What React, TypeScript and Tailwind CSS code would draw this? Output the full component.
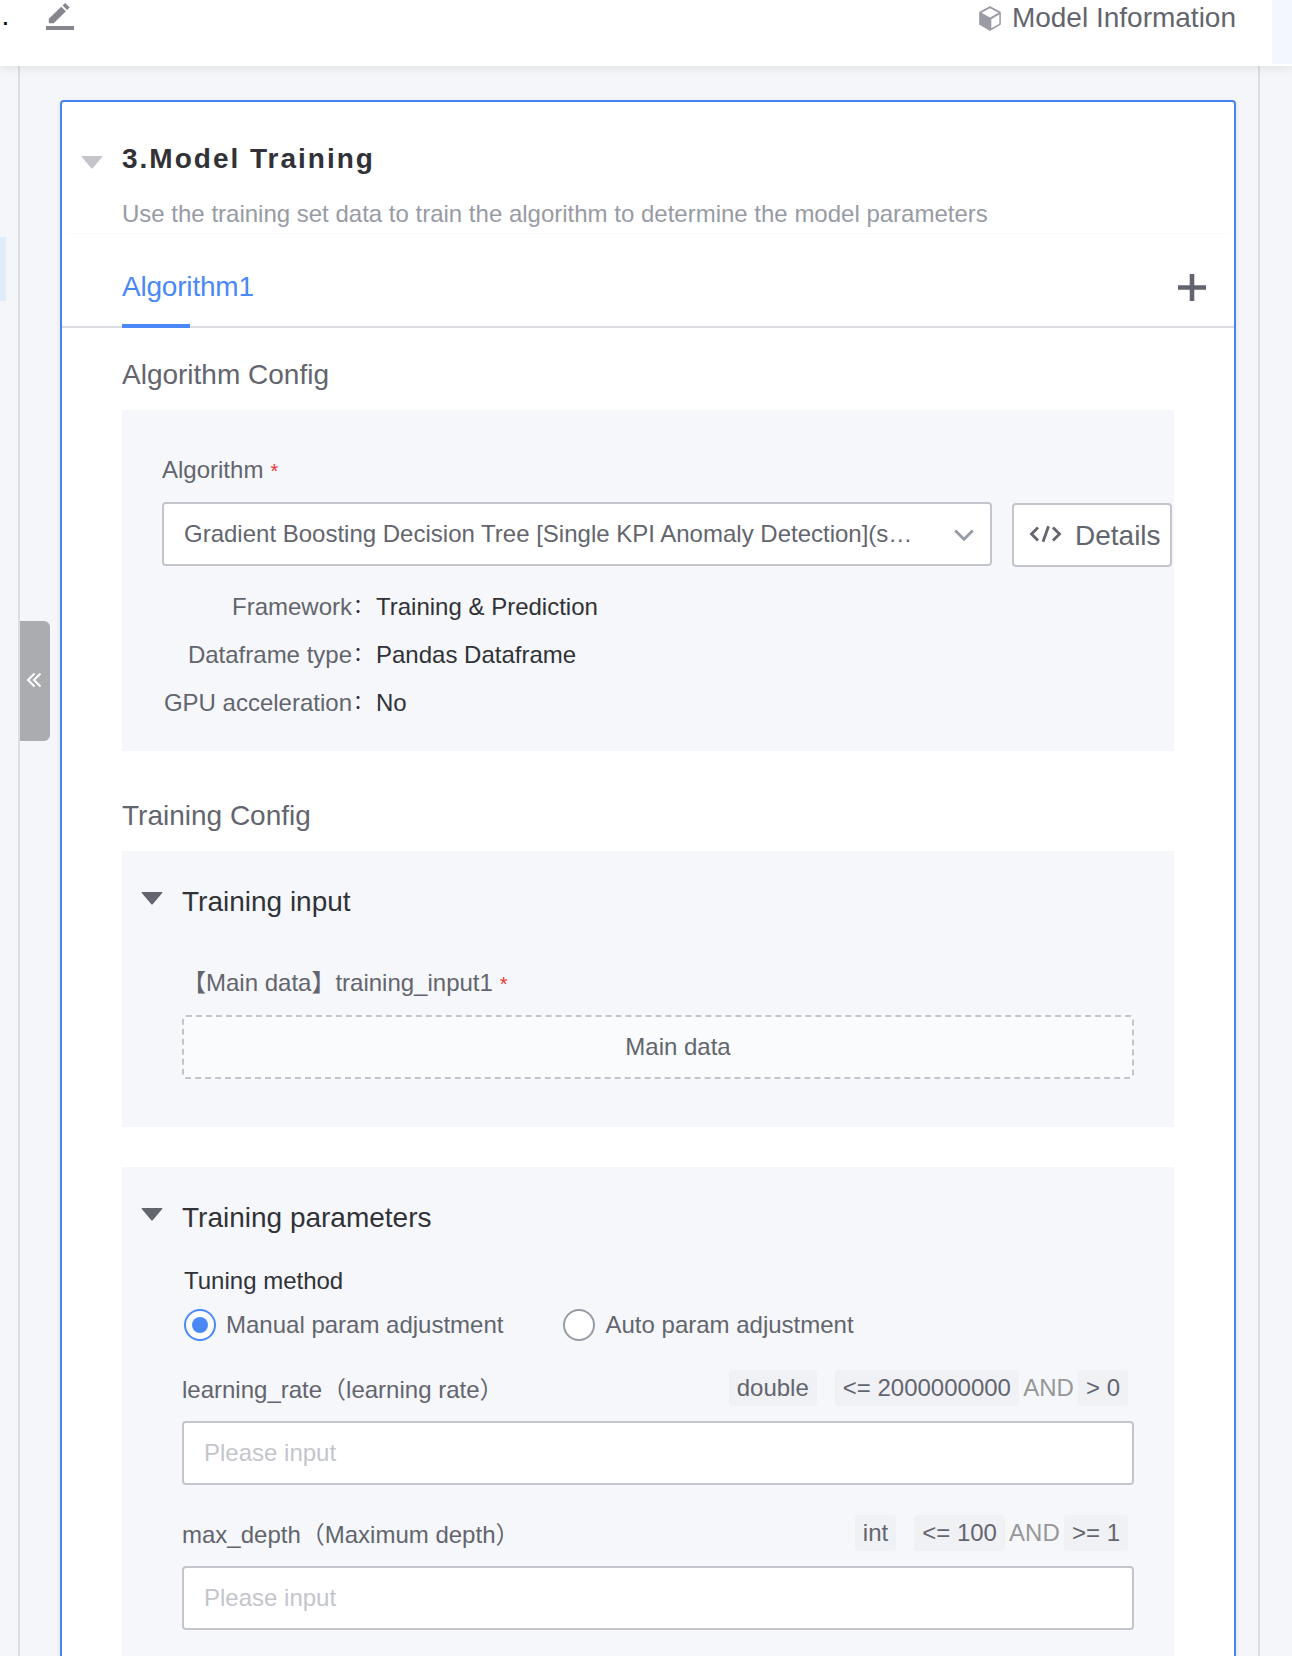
import type { ReactNode } from "react";

function Caret({ className }: { className: string }) {
  return (
    <svg className={className} width="22" height="13" viewBox="0 0 22 13" fill="currentColor">
      <path d="M1.200 0h19.600c.6 0 .8.7.4 1.100L11.700 12.200a1 1 0 0 1-1.400 0L.800 1.100C.4.7.6 0 1.200 0z" />
    </svg>
  );
}

function PencilIcon() {
  return (
    <svg width="28" height="28" viewBox="0 0 28 28" fill="#85868d">
      <path d="M2.800 15.800 15.200 3.800l4.700 4.500L7.700 20.200H2.800z" />
      <path d="m16.600 2.500 2.500-2.500 4.500 4.300-2.500 2.600z" />
      <path d="M0 23h28v4H0z" />
    </svg>
  );
}

function CubeIcon() {
  return (
    <svg width="22" height="25" viewBox="0 0 22 25">
      <path d="M11 .800 21.200 6.400v11.900L11 24.200.800 18.300V6.400z" fill="#9a9ba5" stroke="#9a9ba5" strokeWidth="1.200" strokeLinejoin="round" />
      <path d="M11 2.300 19.500 6.800 11 11.500 2.500 6.800z" fill="#fff" />
      <path d="M12.300 13.200 20.300 8.600v9.100l-8 4.600z" fill="#fff" />
    </svg>
  );
}

function Field({ name, type, rules }: { name: string; type: string; rules: [string, string] }) {
  return (
    <div className="h-[145px]">
      <div className="flex h-9 justify-between pr-1.5">
        <span className="mt-[2px] leading-[35px] whitespace-pre">{name}</span>
        <div className="flex items-center leading-9">
          <Tag>{type}</Tag>
          <span className="w-[18px]" />
          <Tag>{rules[0]}</Tag>
          <span className="w-[59px] text-center text-[#979799]">AND</span>
          <Tag>{rules[1]}</Tag>
        </div>
      </div>
      <input
        placeholder="Please input"
        className="mt-[15px] block h-16 w-full rounded border-2 border-[#c4c5cc] bg-white px-5 text-[24px] outline-none placeholder:text-[#c4c5cc]"
      />
    </div>
  );
}

function Tag({ children }: { children: ReactNode }) {
  return <span className="h-9 rounded bg-[#f0f1f5] px-2 leading-[35px] whitespace-nowrap">{children}</span>;
}

function Info({ label, value }: { label: string; value: string }) {
  return (
    <div className="flex h-12 leading-[48px]">
      <span className="w-[190px] text-right">{label}</span>
      <span className="-mt-px w-[24px] pl-px text-[20px] text-[#313238]">：</span>
      <span className="text-[#313238]">{value}</span>
    </div>
  );
}

export default function App() {
  return (
    <div className="relative flex h-[1656px] w-[1292px] flex-col overflow-hidden bg-[#f4f6fa] font-['Liberation_Sans','Noto_Sans_CJK_SC',sans-serif] text-[24px] text-[#63656e]">
      <header className="relative z-10 flex h-[66px] shrink-0 bg-white shadow-[0_2px_10px_rgba(0,0,0,0.09)]">
        <span className="w-[46px] pl-[1.500px] text-[28px] leading-8 text-black">.</span>
        <div className="pt-[3px]">
          <PencilIcon />
        </div>
        <div className="ml-auto flex pr-9">
          <div className="mr-[11px] pt-[6px]">
            <CubeIcon />
          </div>
          <span className="text-[28px] leading-[35px]">Model Information</span>
        </div>
        <div className="h-16 w-5 bg-[#f3f7ff]" />
      </header>

      <div className="flex flex-1">
        <aside className="w-[18px]">
          <div className="mt-[171px] h-16 w-1.5 bg-[#e1ebfc]" />
        </aside>
        <main className="relative w-[1242px] border-x-2 border-[#dcdde4] px-10 pt-[34px] pr-[22px]">
          <button className="absolute top-[555px] left-0 flex h-[120px] w-[30px] items-center justify-center rounded-r-md bg-[#abacb0]">
            <svg width="16" height="16" viewBox="0 0 16 16" fill="none" stroke="#fff" strokeWidth="2" className="-mt-0.5 -ml-0.5">
              <path d="M8.500 1.500 2 8l6.500 6.500M14.500 1.500 8 8l6.500 6.500" />
            </svg>
          </button>

          <section className="h-[1600px] rounded border-2 border-[#4583f0] bg-white shadow-[0_2px_6px_rgba(0,0,0,0.08)]">
            <div className="flex h-[131px] pt-9">
              <Caret className="mt-[18px] mr-[18px] ml-[19px] text-[#c4c5cc]" />
              <div className="pl-px">
                <h1 className="pt-px text-[28px] leading-10 font-bold tracking-[2px] text-[#313238]">3.Model Training</h1>
                <p className="mt-[19px] leading-8 text-[#979ba5]">
                  Use the training set data to train the algorithm to determine the model parameters
                </p>
              </div>
            </div>
            <div className="mx-1 h-px bg-[#fafafb]" />

            <div className="flex h-[94px] justify-between border-b-2 border-[#dcdde3] pr-7 pl-[60px]">
              <div className="flex w-[68px] flex-col justify-between">
                <span className="mt-[33px] text-[28px] leading-10 tracking-[-0.2px] text-[#4b88f7]">Algorithm1</span>
                <div className="-mb-0.5 h-1 shrink-0 bg-[#4b88f7]" />
              </div>
              <svg className="mt-10" width="28" height="28" viewBox="0 0 28 28" stroke="#63656e" strokeWidth="4.600">
                <path d="M14 0v27M0 13.500h28" />
              </svg>
            </div>

            <div className="px-[60px] pt-[27px]">
              <h2 className="text-[28px] leading-10">Algorithm Config</h2>
              <div className="mt-[15px] h-[341px] bg-[#f5f7fb] pt-11 pl-10">
                <div className="flex leading-8">
                  Algorithm<span className="mt-px ml-[7px] text-[20px] text-[#ea3636]">*</span>
                </div>
                <div className="mt-[15px] flex h-16 gap-5">
                  <div className="flex w-[830px] items-center justify-between rounded border-2 border-[#c4c5cc] bg-white pr-4 pl-5">
                    <span>Gradient Boosting Decision Tree [Single KPI Anomaly Detection](s…</span>
                    <svg className="mt-0.5" width="20" height="13" viewBox="0 0 20 13" fill="none" stroke="#979ba5" strokeWidth="2.800">
                      <path d="m1.200 1.500 8.800 8.800 8.800-8.800" />
                    </svg>
                  </div>
                  <button className="mt-px flex h-16 w-40 shrink-0 rounded border-2 border-[#c4c5cc] bg-white pl-[15px]">
                    <svg className="mt-5 mr-[13px]" width="33" height="18" viewBox="0 0 33 18" fill="none" stroke="#63656e" strokeWidth="2.800">
                      <path d="M9 2.500 2.500 9 9 15.500M19.500 1.200l-5.500 15.600M24 2.500l6.500 6.500-6.500 6.500" />
                    </svg>
                    <span className="text-[28px] leading-[61px]">Details</span>
                  </button>
                </div>
                <div className="mt-[17px]">
                  <Info label="Framework" value="Training & Prediction" />
                  <Info label="Dataframe type" value="Pandas Dataframe" />
                  <Info label="GPU acceleration" value="No" />
                </div>
              </div>

              <h2 className="mt-[45px] text-[28px] leading-10">Training Config</h2>
              <div className="mt-[15px] h-[276px] bg-[#f5f7fb] pt-[31px] pr-10 pl-[19px]">
                <div className="flex text-[28px] leading-10 text-[#313238]">
                  <Caret className="mt-[10px] mr-[19px] text-[#63656e]" />
                  Training input
                </div>
                <div className="pt-[43px] pl-[41px]">
                  <div className="flex leading-9">
                    【Main data】training_input1<span className="mt-px ml-[7px] text-[20px] text-[#ea3636]">*</span>
                  </div>
                  <div className="mt-[13px] h-16 rounded border-2 border-dashed border-[#c4c5cc] bg-[#fafbfd] pl-10 text-center leading-[60px]">
                    Main data
                  </div>
                </div>
              </div>

              <div className="mt-10 h-[520px] bg-[#f5f7fb] pt-[31px] pr-10 pl-[19px]">
                <div className="flex text-[28px] leading-10 text-[#313238]">
                  <Caret className="mt-[10px] mr-[19px] text-[#63656e]" />
                  Training parameters
                </div>
                <div className="pt-[27px] pl-[41px]">
                  <div className="pl-0.5 leading-8 text-[#313238]">Tuning method</div>
                  <div className="mt-3 flex h-8 pl-0.5 leading-8">
                    <div className="flex w-[379px] gap-[10px]">
                      <span className="flex size-8 items-center justify-center rounded-full border-2 border-[#4b88f7] bg-white">
                        <span className="size-4 rounded-full bg-[#4b88f7]" />
                      </span>
                      Manual param adjustment
                    </div>
                    <div className="flex gap-[10.500px]">
                      <span className="size-8 rounded-full border-2 border-[#979ba5] bg-white" />
                      Auto param adjustment
                    </div>
                  </div>
                  <div className="mt-[29px]">
                    <Field name="learning_rate（learning rate）" type="double" rules={["<= 2000000000", "> 0"]} />
                    <Field name="max_depth（Maximum depth）" type="int" rules={["<= 100", ">= 1"]} />
                  </div>
                </div>
              </div>
            </div>
          </section>
        </main>
      </div>
    </div>
  );
}
